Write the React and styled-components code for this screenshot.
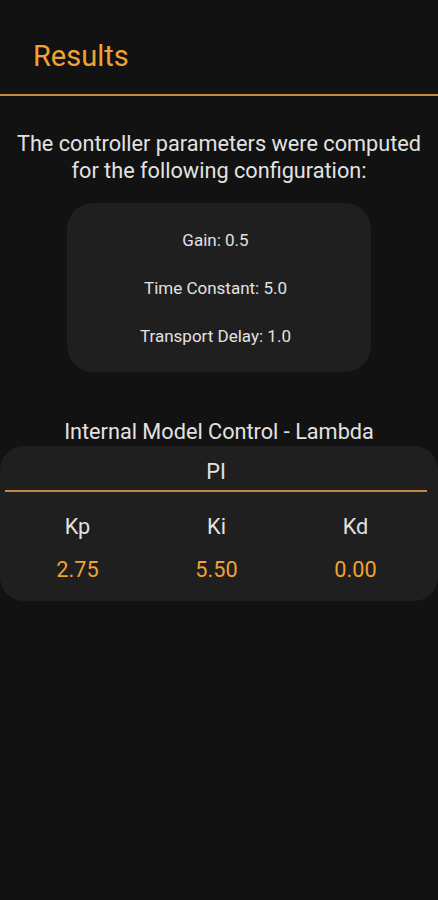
import React from 'react';
import styled, { createGlobalStyle } from 'styled-components';

const accent = '#f0a232';
const textColor = '#e2e2e2';
const cardColor = '#1f1f1f';

const GlobalStyle = createGlobalStyle`
  html, body {
    margin: 0;
    padding: 0;
    background: #121212;
  }
  body {
    font-family: Roboto, 'Noto Sans', sans-serif;
    color: ${textColor};
  }
`;

const Screen = styled.div`
  min-height: 900px;
  background: #121212;
`;

const Header = styled.header`
  height: 96px;
  display: flex;
  align-items: center;
  padding: 18px 33px 0;
  box-sizing: border-box;
  border-bottom: 2px solid #c38a45;
`;

const Title = styled.h1`
  margin: 0;
  font-size: 29px;
  line-height: 34px;
  font-weight: 400;
  color: ${accent};
`;

const Body = styled.main`
  display: flex;
  flex-direction: column;
  align-items: center;
`;

const Intro = styled.p`
  margin: 34px 0 0;
  font-size: 21.7px;
  line-height: 27px;
  text-align: center;
`;

const ConfigCard = styled.section`
  margin-top: 19px;
  width: 304px;
  height: 169px;
  box-sizing: border-box;
  padding-right: 7px;
  background: ${cardColor};
  border-radius: 26px;
  display: flex;
  flex-direction: column;
  align-items: center;
  justify-content: center;
  gap: 28px;
`;

const ConfigLine = styled.div`
  font-size: 17px;
  line-height: 20px;
`;

const MethodTitle = styled.h2`
  margin: 47px 0 0;
  font-size: 21.7px;
  font-weight: 400;
  line-height: 26px;
`;

const ResultCard = styled.section`
  margin-top: 1px;
  width: 438px;
  box-sizing: border-box;
  background: ${cardColor};
  border-radius: 24px;
  padding: 13px 13px 18px 8px;
`;

const TypeLabel = styled.div`
  text-align: center;
  font-size: 21.7px;
  line-height: 26px;
  padding-bottom: 5px;
  margin: 0 -2px 0 -3px;
  border-bottom: 2px solid #c38a45;
`;

const Grid = styled.div`
  display: grid;
  grid-template-columns: repeat(3, 1fr);
  row-gap: 17px;
  margin-top: 22px;
  text-align: center;
`;

const Cell = styled.div`
  font-size: 21.7px;
  line-height: 26px;
  color: ${p => (p.$value ? accent : textColor)};
`;

const params = [
  ['Kp', '2.75'],
  ['Ki', '5.50'],
  ['Kd', '0.00'],
];

const App = () => (
  <Screen>
    <GlobalStyle />
    <Header>
      <Title>Results</Title>
    </Header>
    <Body>
      <Intro>
        The controller parameters were computed
        <br />
        for the following configuration:
      </Intro>
      <ConfigCard>
        <ConfigLine>Gain: 0.5</ConfigLine>
        <ConfigLine>Time Constant: 5.0</ConfigLine>
        <ConfigLine>Transport Delay: 1.0</ConfigLine>
      </ConfigCard>
      <MethodTitle>Internal Model Control - Lambda</MethodTitle>
      <ResultCard>
        <TypeLabel>PI</TypeLabel>
        <Grid>
          {params.map(([name]) => (
            <Cell key={name}>{name}</Cell>
          ))}
          {params.map(([name, value]) => (
            <Cell key={name} $value>
              {value}
            </Cell>
          ))}
        </Grid>
      </ResultCard>
    </Body>
  </Screen>
);

export default App;
